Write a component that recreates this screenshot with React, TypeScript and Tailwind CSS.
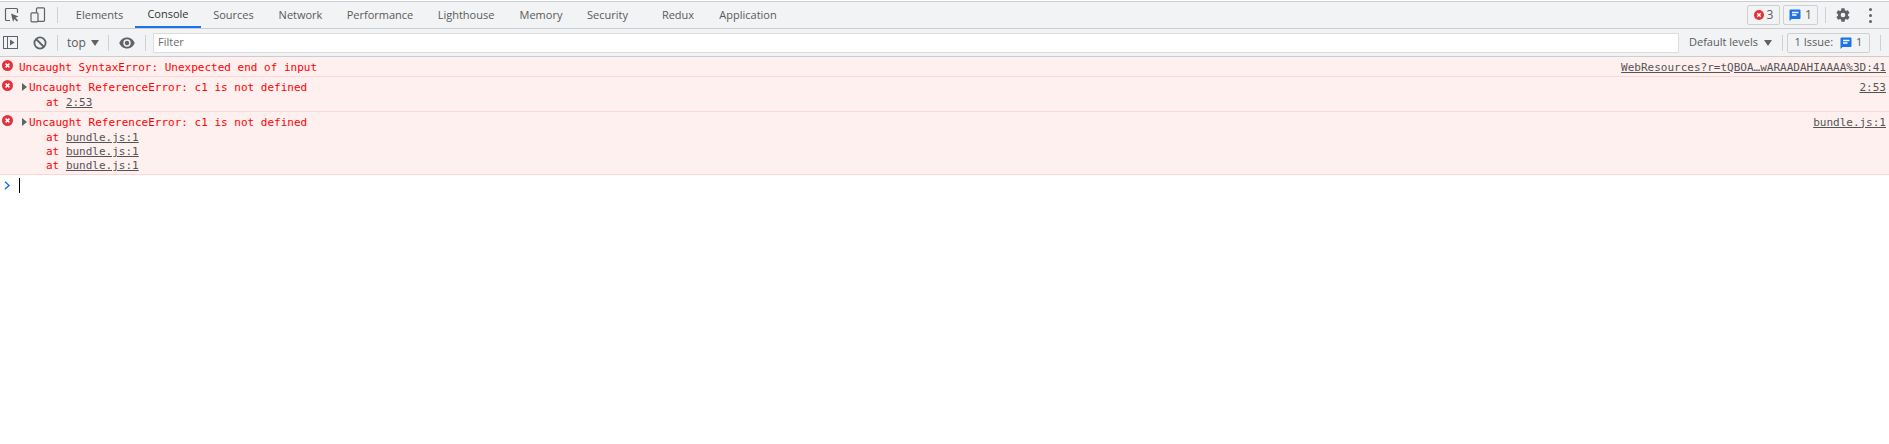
const ui = { fontFamily: '"Open Sans", "Noto Sans", sans-serif' };
const tabs: [string, number][] = [
  ["Elements", 71], ["Console", 66], ["Sources", 65], ["Network", 69], ["Performance", 90],
  ["Lighthouse", 82], ["Memory", 68], ["Security", 65],
];

function Sep({ h = "h-[16px]", mx = "" }: { h?: string; mx?: string }) {
  return <div className={`w-px shrink-0 bg-[#cfd0d2] ${h} ${mx}`} />;
}

function ErrIcon({ size = 11 }: { size?: number }) {
  return (
    <svg width={size} height={size} viewBox="0 0 11 11" className="shrink-0">
      <circle cx="5.5" cy="5.5" r="5.5" fill="#e8303a" />
      <path d="M3.6 3.6l3.8 3.8M7.4 3.6l-3.8 3.8" stroke="#fff" strokeWidth="1.5" />
    </svg>
  );
}

function MsgIcon() {
  return (
    <svg width="12" height="12" viewBox="0 0 12 12" className="shrink-0">
      <path d="M0.5 1.5a1 1 0 0 1 1-1h9a1 1 0 0 1 1 1v7.5a1 1 0 0 1-1 1H2.5L0.5 12z" fill="#1a73e8" />
      <path d="M3 3.5h6.5M3 6h4.5" stroke="#fff" strokeWidth="1.3" />
    </svg>
  );
}

function Link({ children }: { children: React.ReactNode }) {
  return <span className="underline text-[#545454]">{children}</span>;
}

function Triangle() {
  return <span className="ml-[2px] mr-[2px] h-0 w-0 shrink-0 border-y-[4px] border-l-[5px] border-y-transparent border-l-[#5f6368]" />;
}

function Row({ expand, text, source, stack, h }: { expand?: boolean; text: string; source: string; stack?: string[]; h: string }) {
  return (
    <div className={`flex justify-between border-b border-[#ffd6d6] bg-[#fff0f0] pr-[3px] pl-[2px] ${h}`}>
      <div className="flex flex-col">
        <div className="flex h-[19px] items-center">
          <span className="relative -top-[1px]"><ErrIcon /></span>
          <span className={expand ? "ml-[7px]" : "ml-[6px]"} />
          {expand && <Triangle />}
          <span className="relative top-[1px] text-[#ff0000]">{text}</span>
        </div>
        {stack && (
          <div className="ml-[44px] flex flex-col">
            {stack.map((s, i) => (
              <div key={i} className="h-[14px] leading-[14px] text-[#ff0000]">
                at <Link>{s}</Link>
              </div>
            ))}
          </div>
        )}
      </div>
      <div className="flex h-[19px] items-center pt-[2px]"><Link>{source}</Link></div>
    </div>
  );
}

export default function App() {
  return (
    <div className="h-[444px] w-[1889px] overflow-hidden bg-white">
      <div className="h-[1px] bg-white" />
      <div className="flex h-[28px] items-stretch border-y border-[#cbcdd1] bg-[#f1f3f4] text-[11px] text-[#5a5a5a]" style={ui}>
        <div className="flex w-[57px] shrink-0 items-center">
          <svg width="16" height="16" viewBox="0 0 16 16" className="ml-[4px]" fill="none">
            <path d="M6 13.5H2.5a1 1 0 0 1-1-1v-10a1 1 0 0 1 1-1h10a1 1 0 0 1 1 1V6" stroke="#5f6368" strokeWidth="1.2" />
            <path d="M7 6.5l7.5 3-3 1.2 2.6 2.6-1.2 1.2-2.6-2.6-1.2 3z" fill="#5f6368" />
          </svg>
          <svg width="16" height="16" viewBox="0 0 16 16" className="ml-[10px]" fill="none">
            <rect x="6.5" y="0.8" width="8" height="13.5" rx="1" stroke="#5f6368" strokeWidth="1.2" />
            <rect x="1" y="5.8" width="7" height="9" rx="1" fill="#f1f3f4" stroke="#5f6368" strokeWidth="1.2" />
          </svg>
        </div>
        <div className="flex items-center"><Sep /></div>
        <div className="ml-[6px] flex">
          {tabs.map(([t, w]) => (
            <div key={t} style={{ width: w }} className={`flex items-center justify-center pt-[1px] ${t === "Console" ? "border-b-2 border-[#1a73e8] text-[#333333]" : ""}`}>
              {t}
            </div>
          ))}
          <div className="ml-[10px] flex w-[56px] items-center justify-center pt-[1px]">Redux</div>
          <div className="flex w-[84px] items-center justify-center pt-[1px]">Application</div>
        </div>
        <div className="ml-auto flex items-center">
          <div className="flex h-[20px] w-[33px] items-center justify-center gap-[3px] rounded-[2px] border border-[#cfd0d2] text-[12px]">
            <ErrIcon size={10} /><span>3</span>
          </div>
          <div className="ml-[3px] flex h-[20px] w-[35px] items-center justify-center gap-[4px] rounded-[2px] border border-[#cfd0d2] text-[12px]">
            <MsgIcon /><span>1</span>
          </div>
          <Sep mx="ml-[7px]" />
          <svg width="16" height="16" viewBox="0 0 24 24" className="ml-[9px]" fill="#5f6368">
            <path d="M19.4 13c.04-.33.1-.66.1-1s-.06-.67-.1-1l2.1-1.65a.5.5 0 0 0 .12-.64l-2-3.46a.5.5 0 0 0-.61-.22l-2.49 1a7.3 7.3 0 0 0-1.69-.98l-.38-2.65A.49.49 0 0 0 14 2h-4a.49.49 0 0 0-.49.42l-.38 2.65c-.61.25-1.17.59-1.69.98l-2.49-1a.5.5 0 0 0-.61.22l-2 3.46a.5.5 0 0 0 .12.64L4.57 11c-.04.33-.07.66-.07 1s.03.67.07 1l-2.11 1.65a.5.5 0 0 0-.12.64l2 3.46c.12.22.39.3.61.22l2.49-1c.52.4 1.08.73 1.69.98l.38 2.65c.03.24.24.42.49.42h4c.25 0 .46-.18.49-.42l.38-2.65c.61-.25 1.17-.59 1.69-.98l2.49 1c.23.09.49 0 .61-.22l2-3.46a.5.5 0 0 0-.12-.64zM12 15.5a3.5 3.5 0 1 1 0-7 3.5 3.5 0 0 1 0 7z" />
          </svg>
          <div className="ml-[18px] mr-[17px] flex flex-col gap-[3px]">
            <span className="h-[3px] w-[3px] rounded-full bg-[#5f6368]" />
            <span className="h-[3px] w-[3px] rounded-full bg-[#5f6368]" />
            <span className="h-[3px] w-[3px] rounded-full bg-[#5f6368]" />
          </div>
        </div>
      </div>

      <div className="flex h-[28px] items-center border-b border-[#cbcdd1] bg-[#f1f3f4] text-[11px] text-[#5a5a5a]" style={ui}>
        <svg width="16" height="14" viewBox="0 0 16 14" className="ml-[3px] shrink-0" fill="none">
          <rect x="0.5" y="0.5" width="14" height="12" stroke="#5f6368" />
          <path d="M4.5 0.5v12" stroke="#5f6368" />
          <path d="M7 3.5l4.5 3-4.5 3z" fill="#5f6368" />
        </svg>
        <svg width="14" height="14" viewBox="0 0 14 14" className="ml-[14px] shrink-0" fill="none">
          <circle cx="7" cy="7" r="5.6" stroke="#5f6368" strokeWidth="1.8" />
          <path d="M3 3l8 8" stroke="#5f6368" strokeWidth="1.8" />
        </svg>
        <Sep mx="ml-[10px]" />
        <span className="ml-[9px] w-[19px] text-[12px]">top</span>
        <span className="ml-[5px] h-0 w-0 border-x-[4px] border-t-[6px] border-x-transparent border-t-[#5f6368]" />
        <Sep mx="ml-[9px]" />
        <svg width="16" height="12" viewBox="0 0 16 12" className="ml-[10px] shrink-0">
          <path d="M8 0.5C4.5 0.5 1.6 2.7 0.3 6c1.3 3.3 4.2 5.5 7.7 5.5s6.4-2.2 7.7-5.5C14.4 2.7 11.5 0.5 8 0.5zM8 9.7A3.7 3.7 0 1 1 8 2.3a3.7 3.7 0 0 1 0 7.4zM8 3.8a2.2 2.2 0 1 0 0 4.4 2.2 2.2 0 0 0 0-4.4z" fill="#5f6368" />
        </svg>
        <Sep mx="ml-[10px]" />
        <div className="ml-[7px] flex h-[20px] min-w-0 flex-1 items-center border border-[#dcdddf] bg-white pl-[4px] text-[#6b6b6b]">Filter</div>
        <span className="ml-[10px] w-[69px] shrink-0 whitespace-nowrap">Default levels</span>
        <span className="ml-[6px] h-0 w-0 shrink-0 border-x-[4px] border-t-[6px] border-x-transparent border-t-[#5f6368]" />
        <Sep mx="ml-[10px]" />
        <div className="ml-[4px] flex h-[20px] w-[83px] shrink-0 items-center justify-center rounded-[2px] border border-[#cfd0d2]">
          <span className="whitespace-nowrap">1 Issue:</span><span className="ml-[7px]"><MsgIcon /></span><span className="ml-[4px]">1</span>
        </div>
        <Sep mx="ml-[10px] mr-[8px]" />
      </div>

      <div className="text-[11px] leading-[14px]" style={{ fontFamily: '"DejaVu Sans Mono", monospace' }}>
        <Row h="h-[20px]" text="Uncaught SyntaxError: Unexpected end of input" source="WebResources?r=tQBOA…wARAADAHIAAAA%3D:41" />
        <Row h="h-[35px]" expand text="Uncaught ReferenceError: c1 is not defined" source="2:53" stack={["2:53"]} />
        <Row h="h-[63px]" expand text="Uncaught ReferenceError: c1 is not defined" source="bundle.js:1" stack={["bundle.js:1", "bundle.js:1", "bundle.js:1"]} />
        <div className="flex h-[20px] items-center pl-[4px]">
          <svg width="7" height="9" viewBox="0 0 7 9" fill="none">
            <path d="M1 0.8l4 3.7-4 3.7" stroke="#1a73e8" strokeWidth="1.5" />
          </svg>
          <span className="ml-[8px] h-[15px] w-px bg-black" />
        </div>
      </div>
    </div>
  );
}
